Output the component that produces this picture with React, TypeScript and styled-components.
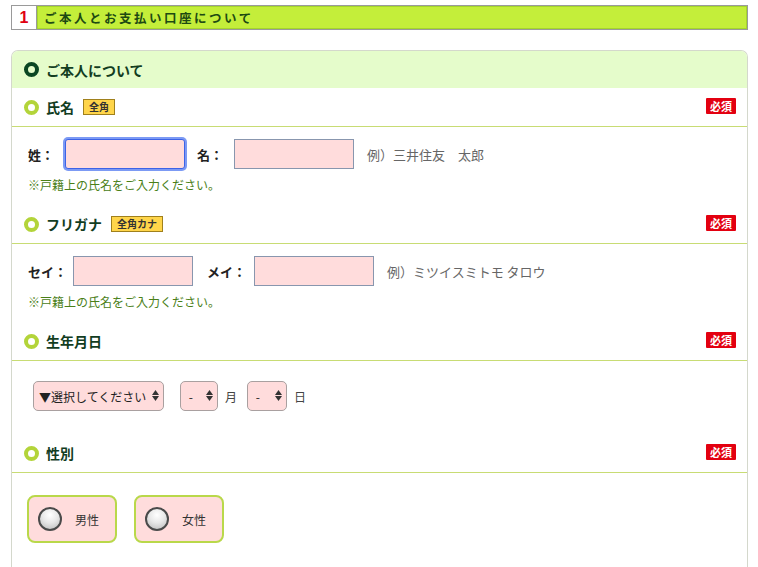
import React from "react";
import styled, { createGlobalStyle, css } from "styled-components";

const GlobalStyle = createGlobalStyle`
  html, body {
    margin: 0;
    padding: 0;
    background: #fff;
    font-family: "Noto Sans CJK JP", "Noto Sans", sans-serif;
    color: #222;
  }
`;

const Page = styled.div`
  padding: 5px 10px 0 11px;
`;

const StepBar = styled.div`
  display: flex;
  height: 23px;
  border: 1px solid #9a9a9a;
`;

const StepNum = styled.div`
  width: 24px;
  display: flex;
  align-items: center;
  justify-content: center;
  font-family: "Liberation Sans", sans-serif;
  font-weight: bold;
  font-size: 16px;
  color: #e00010;
  border-right: 1px solid #9a9a9a;
  background: #fff;
`;

const StepTitle = styled.div`
  flex: 1;
  display: flex;
  align-items: center;
  padding-left: 7px;
  background: #c4ee3a;
  box-shadow: inset 0 0 0 1px #a5d62a;
  font-size: 12.5px;
  font-weight: bold;
  letter-spacing: 2.5px;
  color: #1d4a12;
`;

const Card = styled.div`
  margin-top: 20px;
  border: 1px solid #d4d8cc;
  border-bottom: none;
  border-radius: 7px 7px 0 0;
  overflow: hidden;
  min-height: 520px;
`;

const CardHead = styled.div`
  display: flex;
  align-items: center;
  gap: 7px;
  height: 37px;
  padding-left: 12px;
  background: #e5fccb;
  font-size: 14px;
  font-weight: bold;
  color: #123d1f;
`;

const Ring = styled.span<{ $dark?: boolean }>`
  box-sizing: border-box;
  display: inline-block;
  width: 15px;
  height: 15px;
  border-radius: 50%;
  border: 4px solid ${(p) => (p.$dark ? "#0a4622" : "#b3d43a")};
`;

const Row = styled.div`
  display: flex;
  align-items: center;
  height: 38px;
  padding: 0 11px 0 12px;
  border-bottom: 1px solid #c8dc74;
`;

const RowLabel = styled.div`
  display: flex;
  align-items: center;
  gap: 7px;
  font-size: 14px;
  font-weight: bold;
  color: #123d1f;
  flex: 1;
`;

const Tag = styled.span`
  margin-left: 2px;
  padding: 0 5px;
  height: 14px;
  line-height: 14px;
  font-size: 10px;
  font-weight: bold;
  color: #333;
  background: #ffd54a;
  border: 1px solid #a0801c;
`;

const Required = styled.span`
  margin-top: -3px;
  padding: 0 4px;
  height: 16px;
  line-height: 16px;
  font-size: 11px;
  font-weight: bold;
  color: #fff;
  background: #e30010;
  border-radius: 1px;
`;

const Body = styled.div<{ $pad: string }>`
  padding: ${(p) => p.$pad};
`;

const Fields = styled.div`
  display: flex;
  align-items: center;
`;

const FieldLabel = styled.label<{ $gap: number; $lead?: number }>`
  font-size: 13px;
  font-weight: bold;
  color: #222;
  margin-left: ${(p) => p.$lead ?? 0}px;
  margin-right: ${(p) => p.$gap}px;
`;

const TextBox = styled.input<{ $focused?: boolean }>`
  box-sizing: border-box;
  width: 120px;
  height: 30px;
  margin-right: 12px;
  background: #ffdcdc;
  border: 1px solid #8896ae;
  outline: none;
  ${(p) =>
    p.$focused &&
    css`
      border: 1px solid #3d63e6;
      border-radius: 3px;
      box-shadow: 0 0 0 2px rgba(80, 120, 240, 0.75);
    `}
`;

const Example = styled.span`
  margin-left: 1px;
  font-size: 13px;
  color: #666;
`;

const Note = styled.p`
  margin: 7px 0 0;
  font-size: 12px;
  color: #4a8018;
`;

const SelectWrap = styled.div<{ $w: number }>`
  position: relative;
  width: ${(p) => p.$w}px;
`;

const Select = styled.select`
  box-sizing: border-box;
  width: 100%;
  height: 30px;
  appearance: none;
  -webkit-appearance: none;
  padding: 0 0 0 5px;
  background: #ffdcdc;
  border: 1px solid #a9a0a0;
  border-radius: 5px;
  font-family: "Noto Sans CJK JP", sans-serif;
  font-size: 12px;
  color: #222;
`;

const Arrows = styled.span`
  position: absolute;
  right: 5px;
  top: 9px;
  pointer-events: none;
  display: flex;
  flex-direction: column;
  gap: 1px;
`;

const Unit = styled.span`
  font-size: 12px;
  color: #444;
  margin: 0 10px 0 7px;
`;

const Choices = styled.div`
  display: flex;
  gap: 17px;
`;

const Choice = styled.label`
  box-sizing: border-box;
  display: flex;
  align-items: center;
  width: 90px;
  height: 48px;
  padding-left: 9px;
  gap: 13px;
  background: #ffdcdc;
  border: 2px solid #b9d84a;
  border-radius: 8px;
  font-size: 12px;
  color: #333;
`;

const RadioDot = styled.span`
  box-sizing: border-box;
  width: 24px;
  height: 24px;
  border-radius: 50%;
  border: 2px solid #4a4a4a;
  background: radial-gradient(circle at 50% 30%, #ffffff 0%, #e8e8e8 45%, #b8b8b8 100%);
`;

const UpDown = () => (
  <Arrows>
    <svg width="7" height="5" viewBox="0 0 7 5">
      <path d="M0 5 L3.5 0 L7 5 Z" fill="#333" />
    </svg>
    <svg width="7" height="5" viewBox="0 0 7 5">
      <path d="M0 0 L3.5 5 L7 0 Z" fill="#333" />
    </svg>
  </Arrows>
);

const Section = ({ label, tag }: { label: string; tag?: string }) => (
  <Row>
    <RowLabel>
      <Ring />
      {label}
      {tag && <Tag>{tag}</Tag>}
    </RowLabel>
    <Required>必須</Required>
  </Row>
);

export default function App() {
  return (
    <Page>
      <GlobalStyle />
      <StepBar>
        <StepNum>1</StepNum>
        <StepTitle>ご本人とお支払い口座について</StepTitle>
      </StepBar>

      <Card>
        <CardHead>
          <Ring $dark />
          ご本人について
        </CardHead>

        <Section label="氏名" tag="全角" />
        <Body $pad="12px 16px 12px 16px">
          <Fields>
            <FieldLabel $gap={11}>姓：</FieldLabel>
            <TextBox $focused />
            <FieldLabel $gap={11}>名：</FieldLabel>
            <TextBox />
            <Example>例）三井住友　太郎</Example>
          </Fields>
          <Note>※戸籍上の氏名をご入力ください。</Note>
        </Body>

        <Section label="フリガナ" tag="全角カナ" />
        <Body $pad="12px 16px 12px 16px">
          <Fields>
            <FieldLabel $gap={6}>セイ：</FieldLabel>
            <TextBox />
            <FieldLabel $gap={8} $lead={2}>メイ：</FieldLabel>
            <TextBox />
            <Example>例）ミツイスミトモ タロウ</Example>
          </Fields>
          <Note>※戸籍上の氏名をご入力ください。</Note>
        </Body>

        <Section label="生年月日" />
        <Body $pad="20px 16px 23px 21px">
          <Fields>
            <SelectWrap $w={131}>
              <Select defaultValue="">
                <option value="">▼選択してください</option>
              </Select>
              <UpDown />
            </SelectWrap>
            <span style={{ width: 16 }} />
            <SelectWrap $w={38}>
              <Select defaultValue="-">
                <option value="-">&nbsp;-</option>
              </Select>
              <UpDown />
            </SelectWrap>
            <Unit>月</Unit>
            <SelectWrap $w={40}>
              <Select defaultValue="-">
                <option value="-">&nbsp;-</option>
              </Select>
              <UpDown />
            </SelectWrap>
            <Unit>日</Unit>
          </Fields>
        </Body>

        <Section label="性別" />
        <Body $pad="22px 16px 20px 15px">
          <Choices>
            <Choice>
              <RadioDot />
              男性
            </Choice>
            <Choice>
              <RadioDot />
              女性
            </Choice>
          </Choices>
        </Body>
      </Card>
    </Page>
  );
}
